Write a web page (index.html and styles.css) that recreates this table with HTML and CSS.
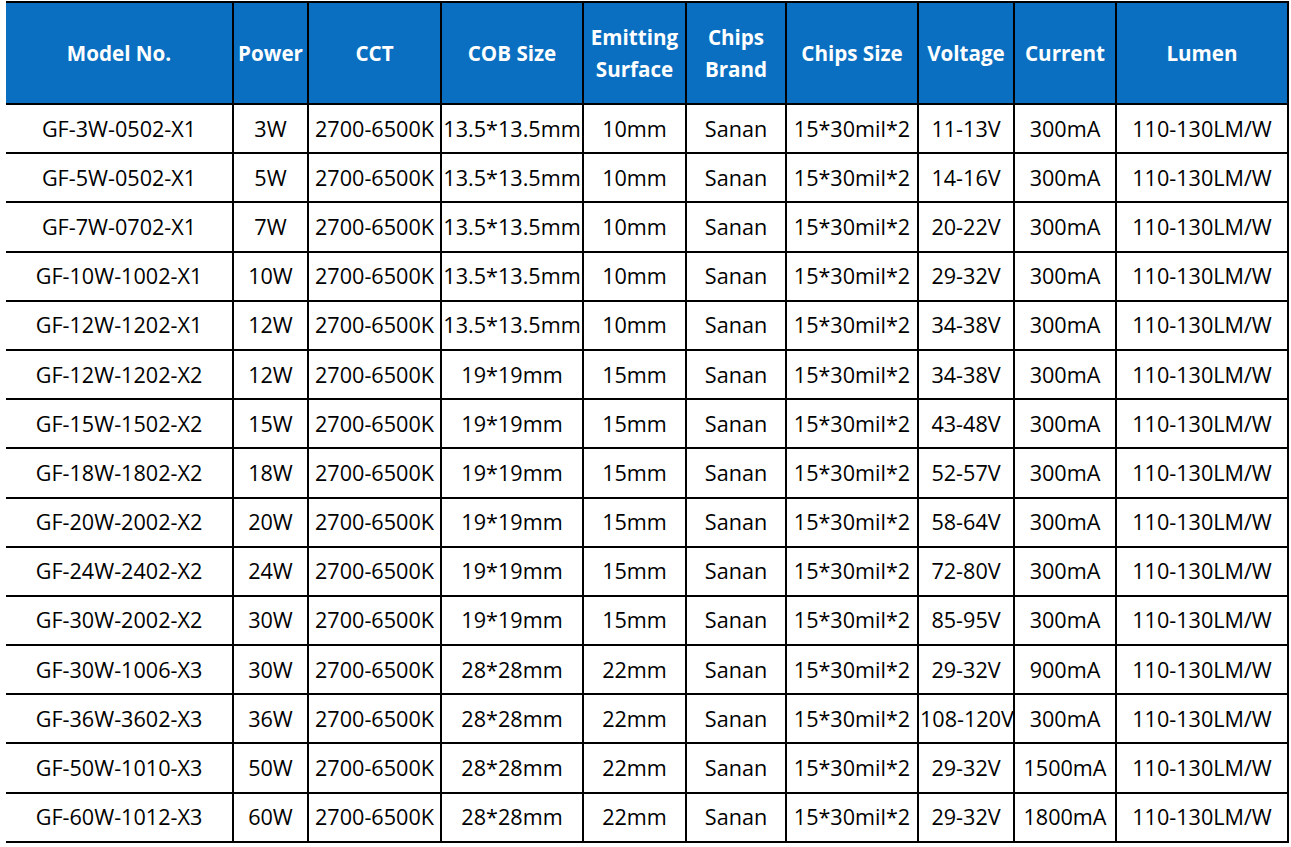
FILE: index.html
```html
<!DOCTYPE html>
<html lang="en">
<head>
<meta charset="utf-8">
<title>COB LED Specifications</title>
<link rel="stylesheet" href="styles.css">
</head>
<body>
<table class="spec">
  <colgroup>
    <col class="c-model"><col class="c-power"><col class="c-cct"><col class="c-cob"><col class="c-emit">
    <col class="c-brand"><col class="c-csize"><col class="c-volt"><col class="c-curr"><col class="c-lumen">
  </colgroup>
  <thead>
    <tr>
      <th>Model No.</th><th>Power</th><th>CCT</th><th>COB Size</th><th>Emitting<br>Surface</th>
      <th>Chips<br>Brand</th><th>Chips Size</th><th>Voltage</th><th>Current</th><th>Lumen</th>
    </tr>
  </thead>
  <tbody>
    <tr><td>GF-3W-0502-X1</td><td>3W</td><td>2700-6500K</td><td>13.5*13.5mm</td><td>10mm</td><td>Sanan</td><td>15*30mil*2</td><td>11-13V</td><td>300mA</td><td>110-130LM/W</td></tr>
    <tr><td>GF-5W-0502-X1</td><td>5W</td><td>2700-6500K</td><td>13.5*13.5mm</td><td>10mm</td><td>Sanan</td><td>15*30mil*2</td><td>14-16V</td><td>300mA</td><td>110-130LM/W</td></tr>
    <tr><td>GF-7W-0702-X1</td><td>7W</td><td>2700-6500K</td><td>13.5*13.5mm</td><td>10mm</td><td>Sanan</td><td>15*30mil*2</td><td>20-22V</td><td>300mA</td><td>110-130LM/W</td></tr>
    <tr><td>GF-10W-1002-X1</td><td>10W</td><td>2700-6500K</td><td>13.5*13.5mm</td><td>10mm</td><td>Sanan</td><td>15*30mil*2</td><td>29-32V</td><td>300mA</td><td>110-130LM/W</td></tr>
    <tr><td>GF-12W-1202-X1</td><td>12W</td><td>2700-6500K</td><td>13.5*13.5mm</td><td>10mm</td><td>Sanan</td><td>15*30mil*2</td><td>34-38V</td><td>300mA</td><td>110-130LM/W</td></tr>
    <tr><td>GF-12W-1202-X2</td><td>12W</td><td>2700-6500K</td><td>19*19mm</td><td>15mm</td><td>Sanan</td><td>15*30mil*2</td><td>34-38V</td><td>300mA</td><td>110-130LM/W</td></tr>
    <tr><td>GF-15W-1502-X2</td><td>15W</td><td>2700-6500K</td><td>19*19mm</td><td>15mm</td><td>Sanan</td><td>15*30mil*2</td><td>43-48V</td><td>300mA</td><td>110-130LM/W</td></tr>
    <tr><td>GF-18W-1802-X2</td><td>18W</td><td>2700-6500K</td><td>19*19mm</td><td>15mm</td><td>Sanan</td><td>15*30mil*2</td><td>52-57V</td><td>300mA</td><td>110-130LM/W</td></tr>
    <tr><td>GF-20W-2002-X2</td><td>20W</td><td>2700-6500K</td><td>19*19mm</td><td>15mm</td><td>Sanan</td><td>15*30mil*2</td><td>58-64V</td><td>300mA</td><td>110-130LM/W</td></tr>
    <tr><td>GF-24W-2402-X2</td><td>24W</td><td>2700-6500K</td><td>19*19mm</td><td>15mm</td><td>Sanan</td><td>15*30mil*2</td><td>72-80V</td><td>300mA</td><td>110-130LM/W</td></tr>
    <tr><td>GF-30W-2002-X2</td><td>30W</td><td>2700-6500K</td><td>19*19mm</td><td>15mm</td><td>Sanan</td><td>15*30mil*2</td><td>85-95V</td><td>300mA</td><td>110-130LM/W</td></tr>
    <tr><td>GF-30W-1006-X3</td><td>30W</td><td>2700-6500K</td><td>28*28mm</td><td>22mm</td><td>Sanan</td><td>15*30mil*2</td><td>29-32V</td><td>900mA</td><td>110-130LM/W</td></tr>
    <tr><td>GF-36W-3602-X3</td><td>36W</td><td>2700-6500K</td><td>28*28mm</td><td>22mm</td><td>Sanan</td><td>15*30mil*2</td><td>108-120V</td><td>300mA</td><td>110-130LM/W</td></tr>
    <tr><td>GF-50W-1010-X3</td><td>50W</td><td>2700-6500K</td><td>28*28mm</td><td>22mm</td><td>Sanan</td><td>15*30mil*2</td><td>29-32V</td><td>1500mA</td><td>110-130LM/W</td></tr>
    <tr><td>GF-60W-1012-X3</td><td>60W</td><td>2700-6500K</td><td>28*28mm</td><td>22mm</td><td>Sanan</td><td>15*30mil*2</td><td>29-32V</td><td>1800mA</td><td>110-130LM/W</td></tr>
  </tbody>
</table>
</body>
</html>
```

FILE: styles.css
```css
html, body {
  margin: 0;
  padding: 0;
  background: #ffffff;
}

body {
  font-family: "Open Sans", "Liberation Sans", sans-serif;
  color: #000000;
}

.spec {
  border-collapse: collapse;
  table-layout: fixed;
  width: 1282px;
  margin: 1px 0 0 6px;
}

.c-model { width: 227px; }
.c-power { width: 75px; }
.c-cct { width: 133px; }
.c-cob { width: 142px; }
.c-emit { width: 103px; }
.c-brand { width: 100px; }
.c-csize { width: 132px; }
.c-volt { width: 96px; }
.c-curr { width: 102px; }
.c-lumen { width: 172px; }

.spec th,
.spec td {
  border: 2px solid #000;
  padding: 0 1px;
  text-align: center;
  vertical-align: middle;
  white-space: nowrap;
  overflow: hidden;
}

.spec th:first-child,
.spec td:first-child {
  border-left: none;
}

.spec thead tr {
  height: 102px;
}

.spec th {
  background: #0a6fc1;
  color: #ffffff;
  font-weight: 700;
  font-size: 20.6px;
  line-height: 32px;
}

.spec tbody tr {
  height: 49.2px;
}

.spec td {
  font-size: 21.6px;
  line-height: 24px;
}
```
